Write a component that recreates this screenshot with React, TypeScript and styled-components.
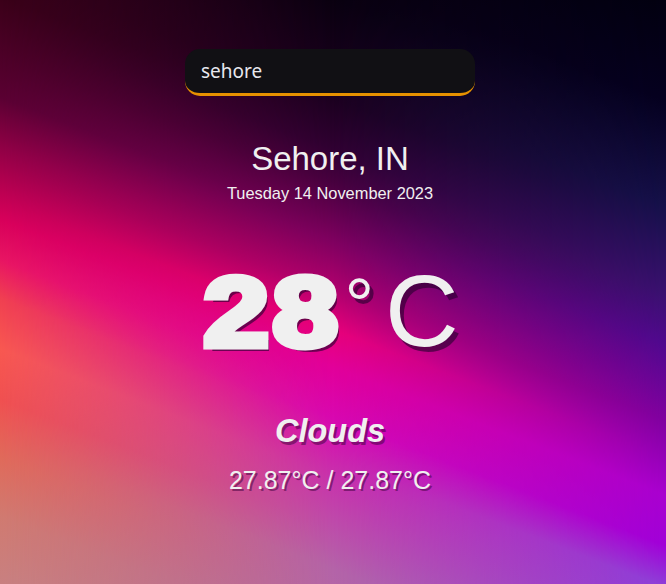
import React from 'react';
import styled, { createGlobalStyle } from 'styled-components';

const GlobalStyle = createGlobalStyle`
  * {
    box-sizing: border-box;
  }
  html, body {
    margin: 0;
    padding: 0;
    background: #0a0010;
  }
`;

// the wallpaper is three diagonal gradients: warm on the left, magenta in the middle, violet on the right
const Page = styled.div`
  position: relative;
  min-height: 100vh;
  overflow: hidden;
  font-family: "Liberation Sans", Arial, sans-serif;
  color: #f0f0f0;
  background: linear-gradient(201deg,
    #050008 0%, #0a0010 15%, #1c0020 27%, #300032 33%, #48003f 37%,
    #800060 44%, #b4006e 50%, #e8007a 54.5%, #e2009a 59%, #d808b0 65%,
    #c832ac 72%, #b464a8 83%, #b070a0 100%);

  &::before,
  &::after {
    content: '';
    position: absolute;
    inset: 0;
    pointer-events: none;
  }

  &::before {
    background: linear-gradient(201deg,
      #200010 0%, #3a0018 30%, #5a0032 42%, #900045 48%, #d8005a 56.6%,
      #e81562 61.4%, #f04050 66%, #f85850 72%, #f05050 78%, #e06a5a 85%,
      #d07a70 92%, #c88080 100%);
    -webkit-mask-image: linear-gradient(to right, #000 0%, transparent 50%);
    mask-image: linear-gradient(to right, #000 0%, transparent 50%);
  }

  &::after {
    background: linear-gradient(201deg,
      #020010 0%, #050020 12%, #15104a 24.5%, #3a1070 35%, #50088f 41%,
      #8000a0 50%, #a800d0 59%, #a000d8 65%, #8c40d8 70%, #9050d0 100%);
    -webkit-mask-image: linear-gradient(to right, transparent 50%, #000 100%);
    mask-image: linear-gradient(to right, transparent 50%, #000 100%);
  }
`;

const Content = styled.main`
  position: relative;
  z-index: 1;
  display: flex;
  flex-direction: column;
  align-items: center;
  padding: 49px 6px 0 0;
  text-align: center;
`;

const SearchInput = styled.input`
  width: 290px;
  height: 47px;
  padding: 0 16px;
  border: none;
  border-bottom: 3px solid #e69100;
  border-radius: 15px;
  outline: none;
  background: #111014;
  color: #e8e8ee;
  font-family: "Noto Sans", "Open Sans", sans-serif;
  font-size: 19px;
`;

const City = styled.h2`
  margin: 45px 0 0;
  font-size: 33px;
  line-height: 36px;
  font-weight: 400;
`;

const DateLine = styled.p`
  margin: 6px 0 0;
  font-size: 16.4px;
  line-height: 20px;
`;

const Temp = styled.h1`
  margin: 57px 0 0;
  font-size: 102px;
  line-height: 102px;
  font-weight: 400;
  text-shadow: 4px 5px 0 rgba(45, 0, 50, 0.65);
`;

// heavy, wide digits: bold face thickened with a stroke and stretched like a black weight
const Degrees = styled.span`
  display: inline-block;
  margin: 0 14px;
  font-size: 98px;
  font-weight: 700;
  letter-spacing: 3px;
  -webkit-text-stroke: 7px #f0f0f0;
  transform: scaleX(1.2);
`;

const Sign = styled.span`
  font-size: 74px;
  line-height: 74px;
  vertical-align: 16px;
  margin-right: 11px;
`;

const Condition = styled.p`
  margin: 50px 0 0;
  font-size: 32.5px;
  line-height: 36px;
  font-weight: 700;
  font-style: italic;
  text-shadow: 2px 3px 0 rgba(60, 0, 60, 0.5);
`;

const Range = styled.p`
  margin: 16px 0 0;
  font-size: 25px;
  line-height: 30px;
  text-shadow: 2px 2px 0 rgba(60, 0, 60, 0.5);
`;

const App: React.FC = () => {
  return (
    <>
      <GlobalStyle />
      <Page>
        <Content>
          <SearchInput type="text" value="sehore" readOnly />
          <City>Sehore, IN</City>
          <DateLine>Tuesday 14 November 2023</DateLine>
          <Temp>
            <Degrees>28</Degrees>
            <Sign>°</Sign>C
          </Temp>
          <Condition>Clouds</Condition>
          <Range>27.87°C / 27.87°C</Range>
        </Content>
      </Page>
    </>
  );
};

export default App;
